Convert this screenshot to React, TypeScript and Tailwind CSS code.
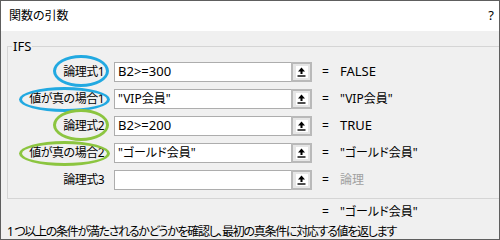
const rows = [
	{ label: "論理式1", value: "B2>=300", result: "FALSE", oval: "blue", tall: true },
	{ label: "値が真の場合1", value: "\"VIP会員\"", result: "\"VIP会員\"", oval: "blue", tall: false },
	{ label: "論理式2", value: "B2>=200", result: "TRUE", oval: "green", tall: true },
	{ label: "値が真の場合2", value: "\"ゴールド会員\"", result: "\"ゴールド会員\"", oval: "green", tall: false },
	{ label: "論理式3", value: "", result: "論理", oval: "", tall: false },
];

// latin strings look a bit larger in the dialog font
const fit = (s: string) => (/[^\x00-\x7f]/.test(s) ? "" : "text-[13px]");

function RefButton() {
	return (
		<div className="w-[21px] h-[20px] border-2 border-[#b9b9b9] bg-[#e6e6e6] flex items-center justify-center">
			<div className="w-[12px] h-[12px] bg-white flex items-center justify-center">
				<svg width="9" height="10" viewBox="0 0 9 10">
					<path d="M4.5 0.5 L1 4.5 H3.5 V7 H5.5 V4.5 H8 Z" fill="#000" />
					<rect x="0.5" y="8.3" width="8" height="1.4" fill="#000" />
				</svg>
			</div>
		</div>
	);
}

export default function App() {
	return (
		<div className="w-[500px] h-[240px] border border-[#5e5e5e] bg-[#f0f0f0] overflow-hidden flex flex-col text-[12px] text-black font-['Noto_Sans','Noto_Sans_CJK_JP',sans-serif] [font-feature-settings:'palt']">
			{/* title bar */}
			<div className="h-[30px] shrink-0 bg-white flex items-center justify-between pl-[8px] pr-[5px]">
				<span>関数の引数</span>
				<span className="text-[13px]">?</span>
			</div>

			{/* group box */}
			<div className="relative mt-[15px] ml-[6px] w-[520px] shrink-0 border border-[#d5d5d5] pt-[15px] pb-[8px]">
				<span className="absolute -top-[9px] left-[4px] px-[1px] bg-[#f0f0f0] leading-[16px] text-[13px]">IFS</span>
				<div className="flex flex-col gap-[7px]">
					{rows.map((r) => (
						<div key={r.label} className="flex items-center h-[20px]">
							<div className="w-[96px] flex justify-end">
								<span className="relative leading-[16px] tracking-[-0.5px]">
									{r.label}
									{r.oval && (
										<span
											className={
												r.tall
													? "absolute -left-[10px] -right-[5px] -top-[9px] -bottom-[7px] rounded-[50%] border-[3px] " +
													  (r.oval === "blue" ? "border-[#22a9e1]" : "border-[#8cc540]")
													: "absolute -left-[10px] -right-[6px] -top-[4px] -bottom-[5px] rounded-[50%] border-[3px] " +
													  (r.oval === "blue" ? "border-[#22a9e1]" : "border-[#8cc540]")
											}
										/>
									)}
								</span>
							</div>
							<div className={"ml-[10px] w-[177px] h-[20px] bg-white border border-[#adadad] border-r-0 flex items-center pl-[3px] " + fit(r.value)}>
								{r.value}
							</div>
							<RefButton />
							<span className="ml-[10px] w-[7px]">=</span>
							<span className={"ml-[11px] " + fit(r.result) + (r.result === "論理" ? " text-[#a0a0a0]" : "")}>
								{r.result}
							</span>
						</div>
					))}
				</div>
			</div>

			{/* result */}
			<div className="mt-[5px] h-[16px] shrink-0 flex items-center pl-[321px] leading-[16px]">
				<span className="w-[7px]">=</span>
				<span className="ml-[11px]">"ゴールド会員"</span>
			</div>

			{/* description */}
			<div className="mt-[4px] h-[16px] shrink-0 pl-[6px] leading-[16px] tracking-[-1.3px] whitespace-nowrap">
				1 つ以上の条件が満たされるかどうかを確認し、最初の真条件に対応する値を返します
			</div>
		</div>
	);
}
